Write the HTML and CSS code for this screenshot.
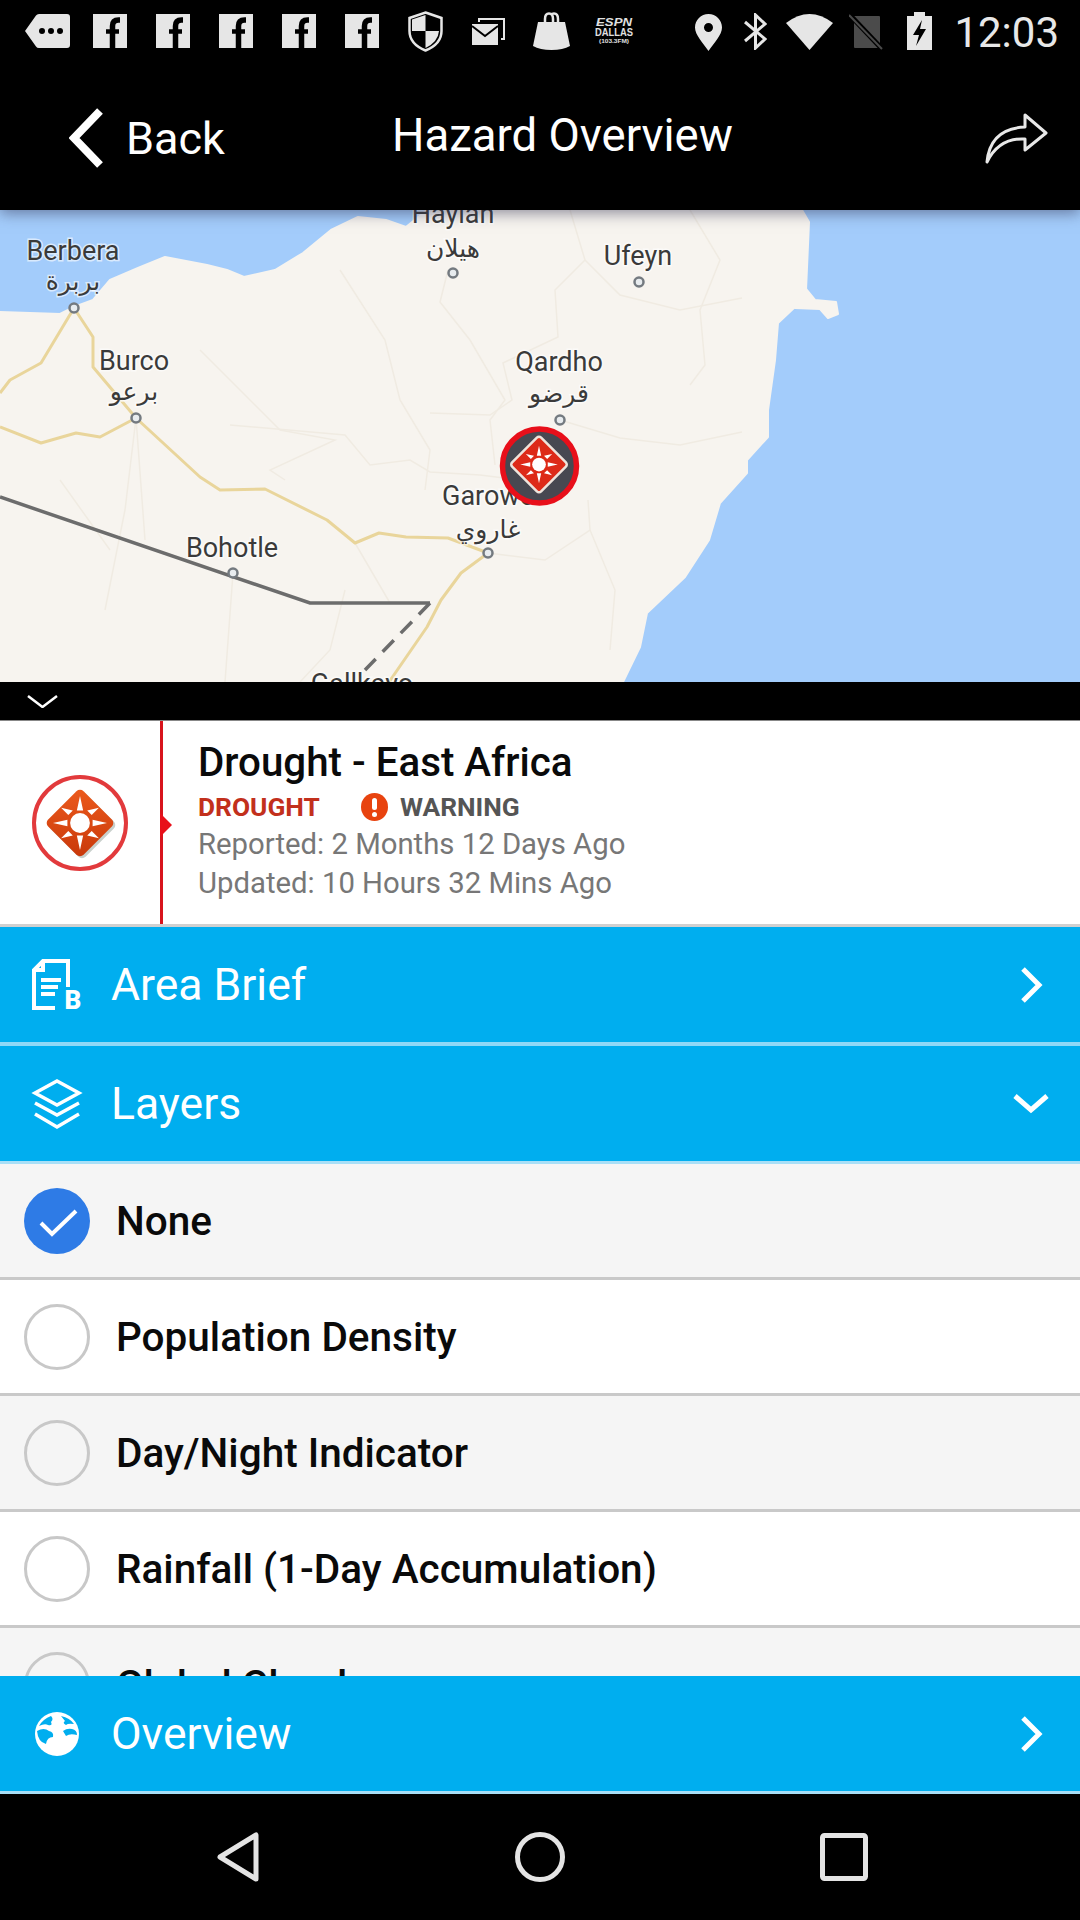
FILE: index.html
```html
<!DOCTYPE html>
<html lang="en">
<head>
<meta charset="utf-8">
<title>Hazard Overview</title>
<link rel="stylesheet" href="styles.css">
</head>
<body>
<svg class="defs" width="0" height="0" aria-hidden="true">
  <defs>
    <symbol id="fb" viewBox="0 0 34 34">
      <rect width="34" height="34" fill="#e6e6e6"/>
      <path d="M19.5 34V12q0-6 6-6h1.5" fill="none" stroke="#000" stroke-width="5.5"/>
      <path d="M13 17.5h13" stroke="#000" stroke-width="4.5"/>
    </symbol>
    <symbol id="sun" viewBox="-40 -40 80 80">
      <circle r="11" fill="#fff"/>
      <path fill="#fff" d="M-3.500-14L0-30 3.500-14ZM-3.500 14L0 30 3.500 14ZM-14-3.500L-30 0-14 3.500ZM14-3.500L30 0 14 3.500Z"/>
      <path fill="#fff" d="M-13-9L-21-17-8-14ZM13-9L21-17 8-14ZM-13 9L-21 17-8 14ZM13 9L21 17 8 14Z"/>
    </symbol>
    <linearGradient id="orange" x1="0" y1="0" x2="1" y2="1">
      <stop offset="0" stop-color="#ec5a1c"/>
      <stop offset="1" stop-color="#c8380a"/>
    </linearGradient>
  </defs>
</svg>
<div class="screen">
  <header class="header">
    <div class="status">
      <div class="status-left">
        <svg class="i-tag" viewBox="0 0 45 34"><path fill="#e6e6e6" d="M11 1.500Q12 0 14 0H42Q45 0 45 3V31Q45 34 42 34H14Q12 34 11 32.500L0 17Z"/><circle cx="17" cy="17" r="3" fill="#000"/><circle cx="26" cy="17" r="3" fill="#000"/><circle cx="35" cy="17" r="3" fill="#000"/></svg>
        <svg class="i-fb i-fb-first"><use href="#fb"/></svg>
        <svg class="i-fb"><use href="#fb"/></svg>
        <svg class="i-fb"><use href="#fb"/></svg>
        <svg class="i-fb"><use href="#fb"/></svg>
        <svg class="i-fb"><use href="#fb"/></svg>
        <svg class="i-shield" viewBox="0 0 35 41"><path fill="none" stroke="#e6e6e6" stroke-width="2.500" d="M17.500 1.500L33.500 7V20Q33.500 33 17.500 39.500 1.500 33 1.500 20V7Z"/><path fill="#e6e6e6" d="M17.500 4V20H4V8.500ZM17.500 20H31Q30 31 17.500 37Z"/></svg>
        <svg class="i-mail" viewBox="0 0 33 27"><path fill="none" stroke="#e6e6e6" stroke-width="2" d="M7 4V1H32V21H29"/><rect x="0" y="6" width="26" height="21" fill="#e6e6e6"/><path fill="none" stroke="#000" stroke-width="2" d="M0 8L13 18 26 8"/></svg>
        <svg class="i-bag" viewBox="0 0 37 38"><path fill="#e6e6e6" d="M5 10H32L37 34Q30 38 18.500 38 7 38 0 34Z"/><path fill="none" stroke="#e6e6e6" stroke-width="2.500" d="M12 14V7Q12 1.500 16 1.500 20 1.500 20 7V12M18 3Q19 1.500 21 1.500 25 1.500 25 7V14"/></svg>
        <svg class="i-espn" viewBox="0 0 40 30"><text class="espn-a" x="20" y="10" textLength="36" lengthAdjust="spacingAndGlyphs">ESPN</text><text class="espn-b" x="20" y="20" textLength="38" lengthAdjust="spacingAndGlyphs">DALLAS</text><text class="espn-c" x="20" y="27" textLength="30" lengthAdjust="spacingAndGlyphs">(103.3FM)</text></svg>
      </div>
      <div class="status-right">
        <svg class="i-pin" viewBox="0 0 27 37"><path fill="#e6e6e6" fill-rule="evenodd" d="M13.500 0C21 0 27 6 27 13.500 27 21 19 29 13.500 37 8 29 0 21 0 13.500 0 6 6 0 13.500 0ZM13.500 9A4.500 4.500 0 1 0 13.501 18 4.500 4.500 0 1 0 13.500 9Z"/></svg>
        <svg class="i-bt" viewBox="0 0 23 37"><path fill="none" stroke="#e6e6e6" stroke-width="3" d="M1 9L21 26 11.500 35V2L21 11 1 28"/></svg>
        <svg class="i-wifi" viewBox="0 0 47 37"><path fill="#e6e6e6" d="M0 10Q23.500-8 47 10L23.500 37Z"/></svg>
        <svg class="i-sim" viewBox="0 0 34 36"><path fill="#4b4b4b" d="M5 2H30Q31 2 31 3V33Q31 34 30 34H6Q5 34 5 33Z"/><path stroke="#000" stroke-width="5" d="M-1-1L34 36"/><path stroke="#4b4b4b" stroke-width="2" d="M0 1L33 35"/></svg>
        <svg class="i-bat" viewBox="0 0 25 38"><path fill="#e6e6e6" d="M7 0H18V4H25V38H0V4H7Z"/><path fill="#000" d="M15 8L6 23H12L9 34 19 17H13Z"/></svg>
        <span class="clock">12:03</span>
      </div>
    </div>
    <div class="toolbar">
      <div class="tool-back">
        <svg class="i-back" viewBox="0 0 34 60"><path fill="none" stroke="#fff" stroke-width="8" d="M31 3L5 30 31 57"/></svg>
        <span>Back</span>
      </div>
      <h1 class="tool-title">Hazard Overview</h1>
      <svg class="i-share" viewBox="0 0 63 52"><path fill="none" stroke="#e8e8e8" stroke-width="3" stroke-linejoin="round" d="M2 50C4 28 17 16 40 15V3L61 21 40 38V27C22 26 10 34 2 50Z"/></svg>
    </div>
  </header>

  <section class="map">
    <svg class="map-svg" viewBox="0 0 1080 472" width="1080" height="472">
      <rect width="1080" height="472" fill="#a3ccfb"/>
      <path class="map-land" d="M0 102L60 104 74 97 93 90 110 70 138 58 165 47 207 55 227 60 244 67 275 60 303 43 331 20 358 7 386 10 406 17 427 0H802L809 12 806 80 795 97 778 113 775 150 768 200 768 227 747 250 747 263 720 293 709 330 685 367 647 403 640 437 623 472H0Z"/>
      <path class="map-land" d="M802 83L806 79 815 90 836 92 838 104 828 108 820 99 795 98Z"/>
      <g class="map-minor">
        <path d="M570 0L585 50 555 80 558 127 503 153 512 190 490 205 430 203"/>
        <path d="M585 50L620 85 680 100 742 88"/>
        <path d="M690 0L720 50 700 100 705 155 690 175"/>
        <path d="M448 60L440 92 470 130 505 190 490 210 495 255"/>
        <path d="M560 210L620 228 680 235 742 222"/>
        <path d="M200 140L280 220 335 230 270 260 285 270"/>
        <path d="M230 215L345 225 370 255 410 250 430 262 480 265 520 270"/>
        <path d="M340 60L385 130 400 190 430 240 425 280"/>
        <path d="M136 208L125 300 105 400M136 208L145 330"/>
        <path d="M588 290L590 320 545 350 488 343"/>
        <path d="M590 320L615 380 610 440"/>
        <path d="M345 380L330 440 300 472M355 333L390 393M233 363L225 472M60 270L110 340"/>
      </g>
      <g class="map-road">
        <path d="M74 98L93 127 93 157 136 208 200 267 220 280 265 279 327 310 355 333 379 323 406 327 448 328 488 343 461 363 441 390 427 417 389 472"/>
        <path d="M74 98L41 153 10 170 0 183"/>
        <path d="M0 217L41 233 76 223 100 227 136 208"/>
      </g>
      <path class="map-border" d="M0 287L310 393H430"/>
      <path class="map-border map-dashed" d="M430 393L365 460"/>
      <g class="map-town">
        <circle cx="74" cy="98" r="4.500"/><circle cx="453" cy="63" r="4.500"/><circle cx="639" cy="72" r="4.500"/><circle cx="136" cy="208" r="4.500"/><circle cx="560" cy="210" r="4.500"/><circle cx="488" cy="343" r="4.500"/><circle cx="233" cy="363" r="4.500"/>
      </g>
      <g class="map-label">
        <text x="453" y="13">Haylan</text>
        <text x="73" y="50">Berbera</text>
        <text x="638" y="55">Ufeyn</text>
        <text x="134" y="160">Burco</text>
        <text x="559" y="161">Qardho</text>
        <text x="488" y="295">Garowe</text>
        <text x="232" y="347">Bohotle</text>
        <text x="362" y="483">Gallkayo</text>
      </g>
      <g class="map-label map-arabic">
        <text x="73" y="80">بربرة</text>
        <text x="453" y="47">هيلان</text>
        <text x="134" y="190">برعو</text>
        <text x="559" y="192">قرضو</text>
        <text x="488" y="328">غاروي</text>
      </g>
      <g class="marker">
        <circle cx="539.500" cy="256" r="37" fill="#474851" stroke="#e80f1a" stroke-width="5.500"/>
        <rect x="518.500" y="234" width="41" height="41" rx="3" transform="rotate(45 539 254.500)" fill="#dd2a18" stroke="#eee4dc" stroke-width="2.500"/>
        <use href="#sun" x="514" y="229.500" width="50" height="50"/>
      </g>
    </svg>
  </section>

  <div class="band">
    <svg class="i-collapse" viewBox="0 0 31 13"><path fill="none" stroke="#fff" stroke-width="2.500" d="M1 1L15.500 12 30 1"/></svg>
  </div>

  <section class="panel">
    <div class="panel-icon">
      <svg class="i-hazard" viewBox="0 0 100 100">
        <circle cx="50" cy="50" r="46" fill="#fff" stroke="#e23a3c" stroke-width="4"/>
        <rect x="27" y="27" width="50" height="50" rx="5" transform="rotate(45 52 52)" fill="#c9d0cc"/>
        <rect x="25" y="25" width="50" height="50" rx="5" transform="rotate(45 50 50)" fill="url(#orange)"/>
        <use href="#sun" x="14" y="14" width="72" height="72"/>
      </svg>
    </div>
    <div class="panel-info">
      <h2 class="info-title">Drought - East Africa</h2>
      <div class="info-tags">
        <span class="tag-type">DROUGHT</span>
        <svg class="i-warn" viewBox="0 0 27 28"><ellipse cx="13.500" cy="14" rx="13.500" ry="14" fill="#e8430f"/><rect x="11" y="5" width="5" height="12" rx="2.500" fill="#fff"/><circle cx="13.500" cy="21.500" r="2.500" fill="#fff"/></svg>
        <span class="tag-level">WARNING</span>
      </div>
      <p class="info-line">Reported: 2 Months 12 Days Ago</p>
      <p class="info-line">Updated: 10 Hours 32 Mins Ago</p>
    </div>
  </section>

  <div class="bar">
    <svg class="bar-icon" viewBox="0 0 56 52"><g fill="none" stroke="#fff" stroke-width="4"><path d="M39 28V2H14L5 11V49H26"/><path d="M14 2V11H5"/><path d="M12 21H32M12 28H29M12 35H26"/></g><text class="brief-b" x="44" y="50">B</text></svg>
    <span class="bar-text">Area Brief</span>
    <svg class="bar-chev" viewBox="0 0 40 36"><path fill="none" stroke="#fff" stroke-width="5" d="M12 2L28 18 12 34"/></svg>
  </div>
  <div class="bar bar-layers">
    <svg class="bar-icon" viewBox="0 0 56 50"><g fill="none" stroke="#fff" stroke-width="3.500"><path d="M28 2L50 14 28 26 6 14Z"/><path d="M6 24L28 36 50 24"/><path d="M6 35L28 48 50 35"/></g></svg>
    <span class="bar-text">Layers</span>
    <svg class="bar-chev" viewBox="0 0 40 36"><path fill="none" stroke="#fff" stroke-width="5" d="M4 10L20 24 36 10"/></svg>
  </div>

  <div class="list">
    <div class="row row-alt"><span class="radio radio-on"><svg viewBox="0 0 66 66"><path fill="none" stroke="#fff" stroke-width="4" d="M17 35L28 46 52 23"/></svg></span><span class="row-text">None</span></div>
    <div class="row"><span class="radio"></span><span class="row-text">Population Density</span></div>
    <div class="row row-alt"><span class="radio"></span><span class="row-text">Day/Night Indicator</span></div>
    <div class="row"><span class="radio"></span><span class="row-text">Rainfall (1-Day Accumulation)</span></div>
    <div class="row row-alt"><span class="radio"></span><span class="row-text">Global Clouds</span></div>
  </div>

  <div class="bar bar-overview">
    <svg class="bar-icon" viewBox="0 0 56 46"><circle cx="28" cy="23" r="22" fill="#fff"/><path fill="#00aeef" d="M10 15Q14 8 22 5 25 8 22 11 24 15 19 14 16 12 10 15ZM32 5Q41 7 45 13 39 12 37 14 33 12 36 10ZM8 20Q15 16 20 20 25 21 24 26 18 26 17 33 9 31 8 20ZM34 20Q38 17 43 18 48 19 48 24 41 22 37 25 34 24ZM35 29Q41 26 46 28 43 36 36 40 38 34 35 29ZM12 36Q17 35 20 40 15 39 12 36Z"/></svg>
    <span class="bar-text">Overview</span>
    <svg class="bar-chev" viewBox="0 0 40 36"><path fill="none" stroke="#fff" stroke-width="5" d="M12 2L28 18 12 34"/></svg>
  </div>

  <nav class="nav">
    <svg class="nav-back" viewBox="0 0 42 50"><path fill="none" stroke="#e4e4e4" stroke-width="5" stroke-linejoin="round" d="M39 3V47L3 25Z"/></svg>
    <svg class="nav-home" viewBox="0 0 50 50"><circle cx="25" cy="25" r="22.500" fill="none" stroke="#e4e4e4" stroke-width="5"/></svg>
    <svg class="nav-recent" viewBox="0 0 48 48"><rect x="2.500" y="2.500" width="43" height="43" rx="2" fill="none" stroke="#e4e4e4" stroke-width="5"/></svg>
  </nav>
</div>
</body>
</html>
```

FILE: styles.css
```css
* { box-sizing: border-box; }
html, body { margin: 0; padding: 0; background: #000; }
body { font-family: Roboto, "Noto Sans", sans-serif; }
.defs { position: absolute; }
.screen { width: 1080px; height: 1920px; display: flex; flex-direction: column; overflow: hidden; background: #000; }

.header { height: 210px; flex: none; background: #000; position: relative; z-index: 2; box-shadow: 0 3px 14px rgba(50, 50, 80, .55); }
.status { height: 60px; display: flex; justify-content: space-between; align-items: flex-start; padding: 0 21px 0 25px; }
.status-left, .status-right { display: flex; align-items: flex-start; }
.i-tag { width: 45px; height: 34px; margin-top: 14px; }
.i-fb { width: 34px; height: 34px; margin-top: 14px; margin-left: 29px; }
.i-fb-first { margin-left: 23px; }
.i-shield { width: 35px; height: 41px; margin-top: 11px; margin-left: 29px; }
.i-mail { width: 33px; height: 27px; margin-top: 18px; margin-left: 29px; }
.i-bag { width: 37px; height: 38px; margin-top: 12px; margin-left: 28px; }
.i-espn { width: 40px; height: 30px; margin-top: 16px; margin-left: 24px; }
.espn-a, .espn-b, .espn-c { fill: #e0e0e0; text-anchor: middle; font-family: "Liberation Sans", sans-serif; font-weight: 700; }
.espn-a { font-size: 11px; font-style: italic; }
.espn-b { font-size: 11px; }
.espn-c { font-size: 6px; }
.i-pin { width: 27px; height: 37px; margin-top: 14px; }
.i-bt { width: 23px; height: 37px; margin-top: 13px; margin-left: 22px; }
.i-wifi { width: 47px; height: 37px; margin-top: 13px; margin-left: 19px; }
.i-sim { width: 34px; height: 36px; margin-top: 14px; margin-left: 16px; }
.i-bat { width: 25px; height: 38px; margin-top: 12px; margin-left: 24px; }
.clock { color: #e8e8e8; font-size: 42px; line-height: 50px; margin-top: 8px; margin-left: 22px; }

.toolbar { height: 150px; position: relative; display: flex; align-items: center; justify-content: space-between; padding: 6px 32px 0 69px; color: #fff; }
.tool-back { display: flex; align-items: center; gap: 23px; font-size: 45px; font-weight: 400; }
.i-back { width: 34px; height: 60px; }
.tool-title { position: absolute; left: 392px; top: 48px; margin: 0; font-size: 45.500px; line-height: 56px; font-weight: 400; white-space: nowrap; }
.i-share { width: 63px; height: 52px; }

.map { height: 472px; flex: none; overflow: hidden; position: relative; z-index: 1; }
.map-svg { display: block; }
.map-land { fill: #f7f4ef; stroke: #f7f4ef; stroke-linejoin: round; stroke-width: 2; }
.map-minor path { fill: none; stroke: #f0ebe2; stroke-width: 1.500; }
.map-road path { fill: none; stroke: #e9d59b; stroke-width: 3; stroke-linejoin: round; }
.map-border { fill: none; stroke: #6c6c6c; stroke-width: 3.500; }
.map-dashed { stroke-dasharray: 16 10; }
.map-town circle { fill: #e8ecef; stroke: #747a80; stroke-width: 2.500; }
.map-label text { font-family: Roboto, sans-serif; font-size: 27px; fill: #3a3a3a; text-anchor: middle; stroke: rgba(255, 255, 255, .6); stroke-width: 3px; paint-order: stroke; }
.map-arabic text { font-family: "DejaVu Sans", sans-serif; font-size: 25px; }

.band { height: 39px; flex: none; background: #000; border-bottom: 1px solid #888; padding: 13px 0 0 27px; }
.i-collapse { display: block; width: 31px; height: 13px; }

.panel { height: 206px; flex: none; background: #fff; border-bottom: 3px solid #d0d0d0; display: flex; }
.panel-icon { width: 163px; flex: none; border-right: 3px solid #d8141c; position: relative; display: flex; align-items: center; padding-left: 30px; }
.panel-icon::after { content: ""; position: absolute; left: 160px; top: 92px; border-left: 12px solid #e8101a; border-top: 12px solid transparent; border-bottom: 12px solid transparent; }
.i-hazard { width: 100px; height: 100px; }
.panel-info { padding: 22px 0 0 35px; }
.info-title { margin: 0; font-size: 40.300px; line-height: 40px; font-weight: 500; color: #0a0a0a; white-space: nowrap; }
.info-tags { display: flex; align-items: center; height: 37px; margin-top: 5px; }
.tag-type { font-size: 26.300px; font-weight: 700; color: #c2301c; width: 163px; }
.i-warn { width: 27px; height: 28px; }
.tag-level { font-size: 26.300px; font-weight: 700; color: #555; margin-left: 12px; }
.info-line { margin: 0; font-size: 29.300px; line-height: 39px; color: #777; white-space: nowrap; }

.bar { height: 119px; flex: none; background: #00aeef; border-bottom: 4px solid #8fd8f7; display: flex; align-items: center; padding: 0 29px; color: #fff; }
.bar-layers { height: 118px; border-bottom: 3px solid #a8dff7; }
.bar-overview { height: 118px; border-bottom: 3px solid #a8dff7; }
.bar-icon { width: 56px; height: 52px; flex: none; }
.brief-b { fill: #fff; font-size: 26px; font-weight: 900; text-anchor: middle; }
.bar-text { font-size: 44.500px; margin-left: 26px; }
.bar-chev { width: 40px; height: 36px; margin-left: auto; flex: none; }

.list { flex: 1 1 0; min-height: 0; overflow: hidden; }
.row { height: 116px; flex: none; background: #fff; border-bottom: 3px solid #c9c9c9; display: flex; align-items: center; padding-left: 24px; }
.row-alt { background: #f5f5f5; }
.radio { width: 66px; height: 66px; flex: none; border-radius: 50%; border: 3px solid #c8c8c8; background: transparent; }
.radio-on { border: none; background: #2e7be6; }
.radio-on svg { display: block; width: 66px; height: 66px; }
.row-text { font-size: 40.500px; font-weight: 500; color: #0a0a0a; margin-left: 26px; white-space: nowrap; }

.nav { flex: none; height: 126px; background: #000; display: flex; align-items: center; padding-left: 217px; }
.nav-back { width: 42px; height: 50px; }
.nav-home { width: 50px; height: 50px; margin-left: 256px; }
.nav-recent { width: 48px; height: 48px; margin-left: 255px; }
```
